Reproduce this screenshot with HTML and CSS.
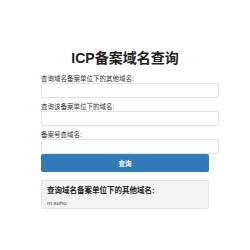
FILE: index.html
```html
<!DOCTYPE html>
<html lang="zh-CN">
<head>
  <meta charset="UTF-8">
  <meta name="viewport" content="width=device-width, initial-scale=1.0">
  <title>ICP备案域名查询</title>
  <link rel="stylesheet" href="styles.css">
</head>
<body>
  <div class="container">
    <h1>ICP备案域名查询</h1>
    <form class="query-form">
      <label for="q-unit">查询域名备案单位下的其他域名:</label>
      <input type="text" id="q-unit">
      <label for="q-name">查询该备案单位下的域名:</label>
      <input type="text" id="q-name">
      <label for="q-icp">备案号查域名:</label>
      <input type="text" id="q-icp" class="last">
      <button type="button">查询</button>
    </form>
    <div class="result">
      <h3>查询域名备案单位下的其他域名:</h3>
      <div class="result-item">m.sohu</div>
    </div>
  </div>
</body>
</html>
```

FILE: styles.css
```css
body {
  margin: 0;
  font-family: "Liberation Sans", "Noto Sans CJK SC", sans-serif;
  background-color: #fff;
  color: #333;
}
.container {
  width: 168px;
  margin: 0 auto;
  padding-top: 50px;
}
h1 {
  margin: 0 0 9px;
  font-size: 14px;
  line-height: 16px;
  text-align: center;
  color: #222;
}
.query-form { display: flex; flex-direction: column; align-items: flex-start; }
.query-form label {
  font-size: 6.5px;
  line-height: 8px;
  color: #333;
}
.query-form input {
  width: 100%;
  height: 13px;
  padding: 0 4px;
  margin: 0 0 5px;
  border: 1px solid #e2e2e2;
  border-radius: 2px;
  box-sizing: content-box;
  background: #fff;
  font-size: 6.5px;
}
.query-form input.last { margin-bottom: 0; }
.query-form button {
  width: 100%;
  height: 18px;
  margin: 0;
  border: none;
  border-radius: 2px;
  background-color: #337ab7;
  color: #fff;
  font-family: inherit;
  font-size: 6.5px;
  font-weight: bold;
}
.result {
  margin-top: 8px;
  padding: 5px 5px 1px;
  border: 1px solid #e4e4e4;
  border-radius: 2px;
  background-color: #f3f3f3;
}
.result h3 {
  margin: 0 0 4px;
  font-size: 7.5px;
  line-height: 9px;
  color: #222;
}
.result-item {
  font-size: 6px;
  line-height: 8px;
  color: #444;
}
```
